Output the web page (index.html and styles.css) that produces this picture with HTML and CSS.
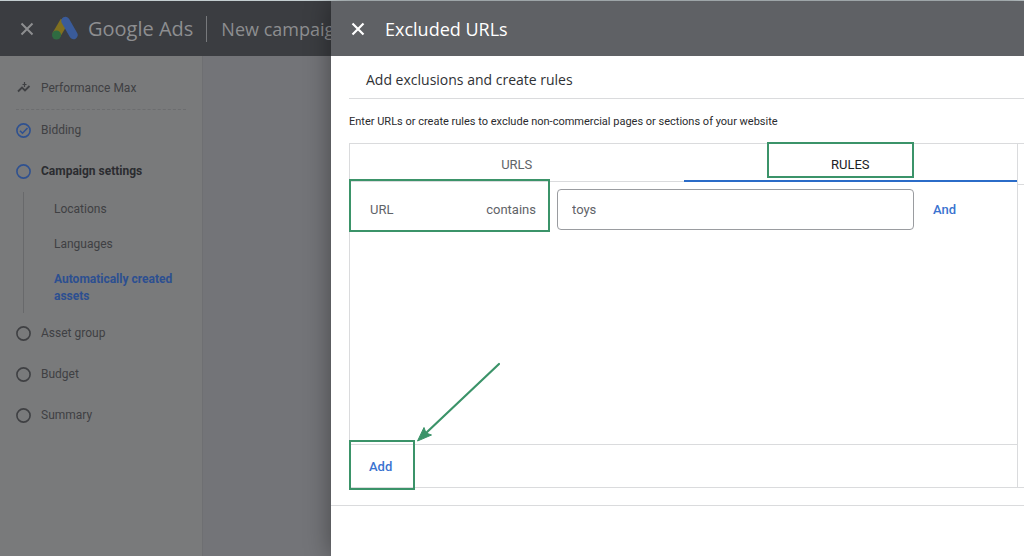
FILE: index.html
```html
<!DOCTYPE html>
<html lang="en">
<head>
<meta charset="utf-8">
<title>Excluded URLs - Google Ads</title>
<link rel="stylesheet" href="styles.css">
</head>
<body>
<div class="app">
  <header class="topbar">
    <button class="icon-button" type="button" aria-label="Close campaign">
      <svg width="14" height="14" viewBox="0 0 14 14"><path d="M1.500 1.500l11 11M12.500 1.500l-11 11" fill="none" stroke="currentColor" stroke-width="2"/></svg>
    </button>
    <svg class="logo" width="28" height="26" viewBox="0 0 28 26" aria-hidden="true">
      <path d="M13.500 5L5 19.500" stroke="#80701f" stroke-width="8.500"/>
      <circle cx="5.500" cy="19" r="4.500" fill="#2f6b41"/>
      <path d="M14.500 5l8 14" stroke="#3a5b99" stroke-width="8.500" stroke-linecap="round"/>
    </svg>
    <span class="brand">Google Ads</span>
    <span class="page-name">New campaign</span>
  </header>
  <div class="workspace">
    <nav class="sidebar" aria-label="Campaign steps">
      <a class="step overview" href="#">
        <svg class="mark" width="16" height="16" viewBox="0 0 16 16" fill="none" stroke="currentColor"><path d="M2 10.500l4-4 3 3L13.500 5" stroke-width="1.800"/><path d="M8.500 1v5M6.500 3.500h4" stroke-width="1.200"/></svg>
        Performance Max</a>
      <a class="step" href="#">
        <svg class="mark active" width="16" height="16" viewBox="0 0 16 16" fill="none" stroke="currentColor" stroke-width="1.600"><circle cx="7.500" cy="7.500" r="6.600"/><path d="M4 7.700l2.500 2.500L11.500 5"/></svg>
        Bidding</a>
      <a class="step current" href="#">
        <svg class="mark active" width="16" height="16" viewBox="0 0 16 16" fill="none" stroke="currentColor" stroke-width="1.600"><circle cx="7.500" cy="7.500" r="6.600"/></svg>
        Campaign settings</a>
      <div class="substeps">
        <a class="substep" href="#">Locations</a>
        <a class="substep" href="#">Languages</a>
        <a class="substep selected" href="#">Automatically created assets</a>
      </div>
      <a class="step" href="#">
        <svg class="mark" width="16" height="16" viewBox="0 0 16 16" fill="none" stroke="currentColor" stroke-width="1.600"><circle cx="7.500" cy="7.500" r="6.600"/></svg>
        Asset group</a>
      <a class="step" href="#">
        <svg class="mark" width="16" height="16" viewBox="0 0 16 16" fill="none" stroke="currentColor" stroke-width="1.600"><circle cx="7.500" cy="7.500" r="6.600"/></svg>
        Budget</a>
      <a class="step" href="#">
        <svg class="mark" width="16" height="16" viewBox="0 0 16 16" fill="none" stroke="currentColor" stroke-width="1.600"><circle cx="7.500" cy="7.500" r="6.600"/></svg>
        Summary</a>
    </nav>
  </div>
</div>

<section class="drawer" aria-labelledby="drawer-title">
  <header class="drawer-header">
    <button class="icon-button" type="button" aria-label="Close">
      <svg width="14" height="14" viewBox="0 0 14 14"><path d="M1.500 1.500l11 11M12.500 1.500l-11 11" fill="none" stroke="currentColor" stroke-width="2.200"/></svg>
    </button>
    <h1 class="drawer-title" id="drawer-title">Excluded URLs</h1>
  </header>
  <div class="drawer-body">
    <h2 class="section-title">Add exclusions and create rules</h2>
    <p class="intro">Enter URLs or create rules to exclude non-commercial pages or sections of your website</p>
    <div class="columns">
      <div class="editor">
        <div class="tabs" role="tablist">
          <button class="tab" type="button" role="tab" aria-selected="false">URLS</button>
          <button class="tab tab-on" type="button" role="tab" aria-selected="true">RULES<span class="highlight highlight-tab"></span></button>
        </div>
        <div class="rule">
          <label class="condition" for="rule-value"><span>URL</span><span>contains</span><span class="highlight highlight-condition"></span></label>
          <input class="value" id="rule-value" type="text" value="toys">
          <button class="link-button" type="button">And</button>
        </div>
        <div class="editor-footer">
          <button class="link-button" type="button">Add</button>
          <span class="highlight highlight-add"></span>
          <svg class="arrow" width="86" height="82" viewBox="0 0 86 82" aria-hidden="true"><path d="M83 2L10 71" stroke="#3b9369" stroke-width="2.200" stroke-linecap="round"/><path d="M1.500 79L8 65.500l2 5.500 5.500 2z" fill="#3b9369" stroke="#3b9369"/></svg>
        </div>
      </div>
      <div class="preview"><div class="preview-header"></div></div>
    </div>
  </div>
</section>
</body>
</html>
```

FILE: styles.css
```css
* { box-sizing: border-box; }

body {
  margin: 0;
  min-height: 100vh;
  overflow: hidden;
  border-top: 1px solid #c3cdd0;
  background: #737478;
  color: #3c4043;
  font: 13px/17px Roboto, sans-serif;
}

button {
  padding: 0;
  border: 0;
  background: none;
  color: inherit;
  font: inherit;
  cursor: pointer;
}

a { color: inherit; text-decoration: none; }

.app { display: flex; flex-direction: column; min-height: calc(100vh - 1px); }

.topbar {
  display: flex;
  align-items: center;
  height: 55px;
  padding-left: 20px;
  background: #3b3d41;
  color: #8d8e90;
  font: 18px/26px "Open Sans", sans-serif;
  white-space: nowrap;
}

.icon-button { display: flex; }
.logo { margin: 0 9px 0 17px; }
.brand { padding-right: 13px; border-right: 1px solid #77797c; font-size: 20px; }
.page-name { padding-left: 14px; }

.workspace { display: flex; flex: 1; }

.sidebar {
  width: 203px;
  padding: 12px 16px 0;
  border-right: 1px solid #6e6f72;
  background: #797a7b;
  color: #3f4043;
  font-size: 12px;
}

.step { display: flex; align-items: center; gap: 9px; height: 41px; }
.overview { height: 42px; border-bottom: 1px dashed #6c6d6f; }
.current { color: #2b2c30; font-weight: 700; }
.mark.active { color: #2f5190; }

.substeps {
  display: flex;
  flex-direction: column;
  gap: 1px;
  margin-left: 7px;
  padding-left: 30px;
  border-left: 1px solid #68696b;
}

.substep { padding: 9px 0 8px; }
.selected { color: #2c4f91; font-weight: 700; }

.drawer {
  position: absolute;
  inset: 1px 0 0 331px;
  background: #fff;
  box-shadow: 0 0 24px rgba(0, 0, 0, .4);
}

.drawer-header {
  display: flex;
  align-items: center;
  gap: 20px;
  height: 55px;
  padding-left: 20px;
  background: #5f6165;
  color: #fff;
}

.drawer-title { margin: 0; font: 500 18px/26px "Open Sans", sans-serif; }

.drawer-body { padding: 0 0 17px 18px; border-bottom: 1px solid #dadbdd; }

.section-title {
  margin: 0;
  padding: 15px 17px 10px;
  border-bottom: 1px solid #dadbdd;
  color: #2f3135;
  font: 500 14px/17px "Open Sans", sans-serif;
}

.intro { margin: 15px 0 13px; color: #2a2b2e; font-size: 11px; line-height: 16px; }

.columns {
  display: flex;
  border: solid #dadbdd;
  border-width: 1px 0;
}

.editor {
  display: flex;
  flex: 1;
  flex-direction: column;
  min-height: 343px;
  border: solid #dadbdd;
  border-width: 0 1px;
}

.preview { width: 6px; }
.preview-header { height: 41px; border-bottom: 1px solid #dadbdd; }

.tabs { display: flex; height: 38px; border-bottom: 1px solid #dadbdd; }

.tab {
  position: relative;
  flex: 1;
  height: 38px;
  padding-top: 4px;
  border-bottom: 2px solid transparent;
  color: #5f6368;
}

.tab-on { border-color: #2b6cc8; color: #202124; }

.rule { display: flex; flex: 1; align-items: flex-start; padding: 7px 20px 0 0; }

.condition {
  position: relative;
  display: flex;
  justify-content: space-between;
  width: 207px;
  padding: 12px 21px 12px 20px;
  color: #5f6368;
}

.value {
  flex: 1;
  min-width: 0;
  height: 41px;
  padding: 0 14px;
  border: 1px solid #9a9ca0;
  border-radius: 4px;
  background: #fff;
  color: #5f6368;
  font: inherit;
}

.link-button { color: #3a73d0; font-weight: 500; }
.rule .link-button { width: 83px; padding: 12px 0 12px 19px; text-align: left; }

.editor-footer {
  position: relative;
  display: flex;
  align-items: center;
  height: 43px;
  padding-left: 19px;
  border-top: 1px solid #dadbdd;
}

/* Walkthrough annotations */
.highlight { position: absolute; border: 2px solid #3b9369; }
.highlight-tab { top: -2px; left: 25%; width: 147px; height: 36px; }
.highlight-condition { inset: -10px 7px -2px -1px; }
.highlight-add { top: -5px; left: -1px; width: 66px; height: 50px; }
.arrow { position: absolute; top: -83px; left: 66px; }
```
